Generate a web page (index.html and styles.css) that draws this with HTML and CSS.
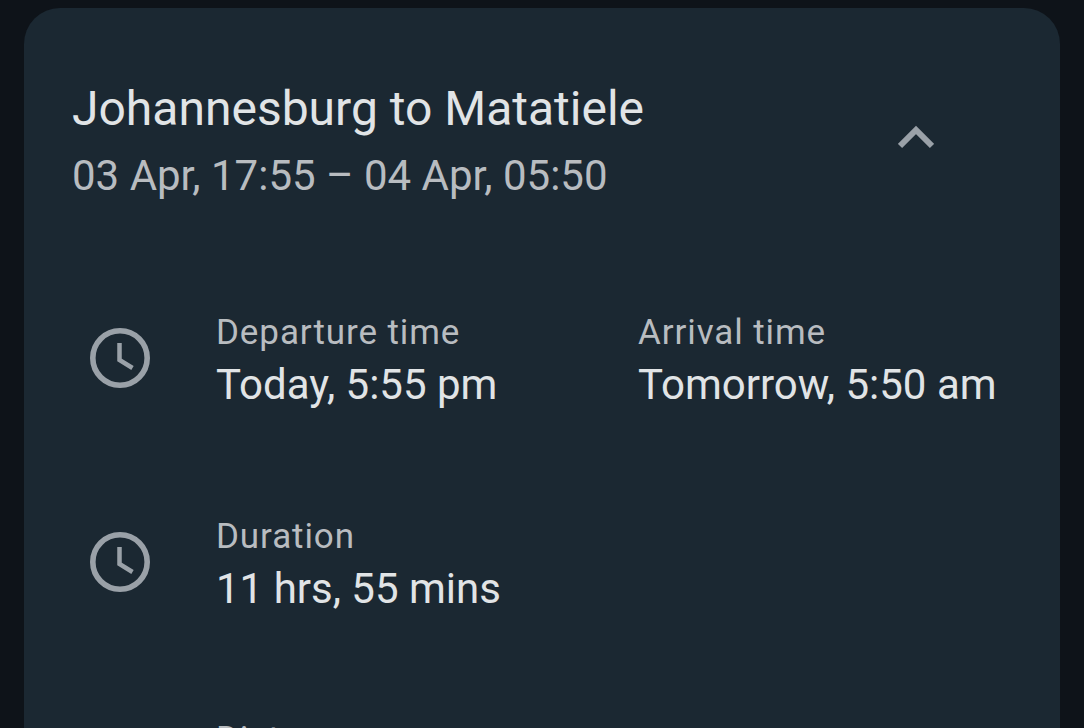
FILE: index.html
```html
<!DOCTYPE html>
<html lang="en">
<head>
  <meta charset="UTF-8" />
  <meta name="viewport" content="width=device-width, initial-scale=1.0"/>
  <title>Trip details</title>
  <link rel="stylesheet" href="styles.css">
</head>
<body>

  <div class="card">

    <!-- Header -->
    <div class="card-head">
      <div class="head-text">
        <div class="route">Johannesburg to Matatiele</div>
        <div class="dates">03 Apr, 17:55 – 04 Apr, 05:50</div>
      </div>
      <svg class="chevron" viewBox="0 0 36 24" width="36" height="24">
        <path d="M2 21 L18 5 L34 21" fill="none" stroke="#9aa1a8" stroke-width="6"/>
      </svg>
    </div>

    <!-- Departure / arrival -->
    <div class="info-row">
      <svg class="clock" viewBox="0 0 60 60" width="60" height="60">
        <circle cx="30" cy="30" r="27.2" fill="none" stroke="#9aa1a8" stroke-width="5.6"/>
        <path d="M29.5 15 V32 L42.5 40" fill="none" stroke="#9aa1a8" stroke-width="4.5"/>
      </svg>
      <div class="info-cell">
        <div class="label">Departure time</div>
        <div class="value">Today, 5:55 pm</div>
      </div>
      <div class="info-cell">
        <div class="label">Arrival time</div>
        <div class="value">Tomorrow, 5:50 am</div>
      </div>
    </div>

    <!-- Duration -->
    <div class="info-row">
      <svg class="clock" viewBox="0 0 60 60" width="60" height="60">
        <circle cx="30" cy="30" r="27.2" fill="none" stroke="#9aa1a8" stroke-width="5.6"/>
        <path d="M29.5 15 V32 L42.5 40" fill="none" stroke="#9aa1a8" stroke-width="4.5"/>
      </svg>
      <div class="info-cell">
        <div class="label">Duration</div>
        <div class="value">11 hrs, 55 mins</div>
      </div>
    </div>

    <!-- Cut off by the bottom of the screen -->
    <div class="info-row last-row">
      <div class="clock"></div>
      <div class="info-cell">
        <div class="label">Distance</div>
      </div>
    </div>

  </div>

</body>
</html>
```

FILE: styles.css
```css
html, body {
  height: 100%;
}

body {
  margin: 0;
  padding: 8px 24px 0;
  box-sizing: border-box;
  overflow: hidden;
  background: #0e1319;
  font-family: Roboto, sans-serif;
}

.card {
  background: #1b2832;
  border-radius: 36px 36px 0 0;
  padding: 73px 0 0 48px;
  min-height: 900px;
}

/* Header */
.card-head {
  display: flex;
  justify-content: space-between;
  align-items: center;
  padding-right: 126px;
}

.chevron {
  margin-bottom: 13px;
}

.route {
  font-size: 48px;
  line-height: 56px;
  color: #e1e4e6;
}

.dates {
  margin-top: 11px;
  margin-bottom: 1px;
  font-size: 42px;
  line-height: 56px;
  color: #b8bcc0;
}

/* Rows */
.info-row {
  display: flex;
  align-items: center;
  height: 204px;
}

.card-head + .info-row {
  margin-top: 51px;
}

.last-row {
  margin-top: -1px;
}

.clock {
  flex: none;
  width: 60px;
  margin: 0 67px 0 18px;
}

.info-cell {
  width: 422px;
  min-height: 112px;
  flex: none;
  box-sizing: border-box;
  padding-top: 9px;
  margin-left: -1px;
  margin-right: 1px;
}

.label {
  font-size: 35px;
  line-height: 44px;
  letter-spacing: 0.9px;
  color: #b8bcc0;
}

.value {
  margin-top: 3px;
  font-size: 42px;
  line-height: 54px;
  color: #e1e4e6;
}
```
